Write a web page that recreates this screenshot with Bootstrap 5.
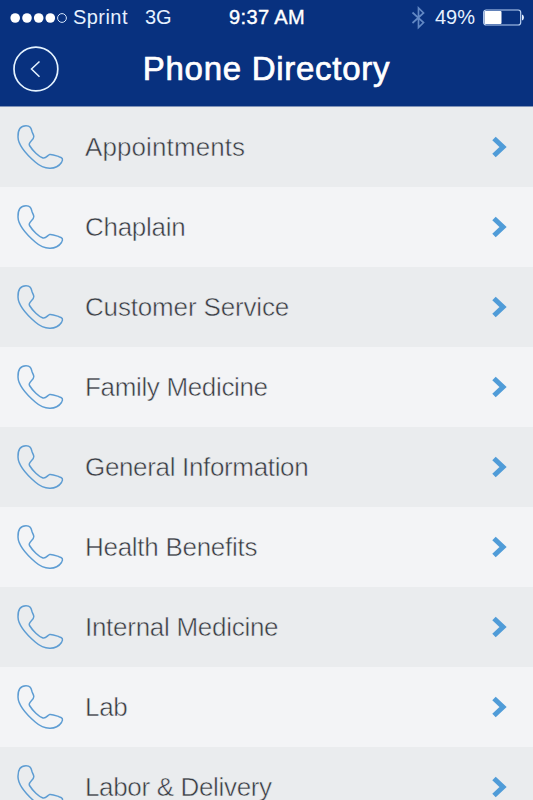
<!DOCTYPE html>
<html lang="en">
<head>
<meta charset="utf-8">
<meta name="viewport" content="width=device-width, initial-scale=1">
<title>Phone Directory</title>
<link rel="stylesheet" href="https://cdn.jsdelivr.net/npm/bootstrap@5.3.0/dist/css/bootstrap.min.css">
<style>
  body { font-family: "Liberation Sans", Arial, sans-serif; background: #f3f4f6; height: 800px; overflow: hidden; }
  .app-header { background: #08317f; height: 107px; border-bottom: 1px solid #8093b8; color: #fff; }
  .status-bar { display: grid; grid-template-columns: 1fr auto 1fr; height: 35px; padding: 0 9px 0 10px; font-size: 20px; line-height: 35px; color: #e6f1ff; }
  .carrier { margin-left: 6px; letter-spacing: .45px; }
  .network { margin-left: 17px; }
  .clock { color: #fff; -webkit-text-stroke: .4px #fff; letter-spacing: .35px; }
  .title-bar { display: grid; grid-template-columns: 46px 1fr 46px; height: 71px; padding: 0 13px; }
  .title-bar h1 { font-size: 33px; font-weight: 400; line-height: 68px; letter-spacing: .72px; -webkit-text-stroke: .7px #fff; }
  .back-btn { margin-top: 11px; height: 46px; }
  .directory .list-group-item { height: 80px; padding: 0 25px 0 16px; color: #383b42; background: #f3f4f6; --row: #f3f4f6; }
  .directory .list-group-item:nth-child(odd) { background: #eaecee; --row: #eaecee; }
  .entry { font-size: 26px; line-height: 80px; margin-left: 20px; letter-spacing: -.28px; -webkit-text-stroke: .5px var(--row); }
  .list-group-item:first-child .entry { letter-spacing: .1px; }
  .list-group-item:nth-child(3) .entry { letter-spacing: -.16px; }
  .list-group-item:nth-child(4) .entry, .list-group-item:nth-child(5) .entry, .list-group-item:nth-child(9) .entry { letter-spacing: -.34px; }
</style>
</head>
<body>
<svg class="d-none" aria-hidden="true">
  <symbol id="phone" viewBox="0 0 49 48"><path d="M10 2.700C4.500 2.700 1.800 6.500 2 14C2.200 23 10.500 31.500 19.500 39.300C28 46.800 40 47.500 45.500 39.500C47.500 36 46.500 34.800 43 33.700C39.500 32.500 36 31 33.500 31.600C31.500 32.200 30 35.800 27 35C23 33.800 16.500 27.500 13.500 22.500C11.700 19.300 18 17 17.800 13.600C17.700 11.800 16.600 10.500 16 8.500C15.100 5 14.200 2.700 10 2.700Z" fill="none" stroke="#5e9dd3" stroke-width="1.500" stroke-linejoin="round"/></symbol>
  <symbol id="chevron" viewBox="0 0 17 24"><path d="M3 3.500L12 12L3 20.500" fill="none" stroke="#509cd8" stroke-width="5"/></symbol>
</svg>

<header class="app-header">
  <div class="status-bar">
    <div class="d-flex align-items-center">
      <svg width="57" height="12" viewBox="0 0 57 12" fill="#fff"><circle cx="5.200" cy="6" r="4.800"/><circle cx="17" cy="6" r="4.800"/><circle cx="28.700" cy="6" r="4.800"/><circle cx="40.300" cy="6" r="4.800"/><circle cx="52" cy="6" r="4.400" fill="none" stroke="#d5e6fb"/></svg>
      <span class="carrier">Sprint</span><span class="network">3G</span>
    </div>
    <div class="clock">9:37 AM</div>
    <div class="d-flex align-items-center justify-content-end">
      <svg class="me-2" width="16" height="24" viewBox="0 0 16 24"><path d="M1.500 6.500L12.500 16.500L7.500 21.500V2L12.500 7L1.500 17" fill="none" stroke="#6288c4" stroke-width="1.700"/></svg>
      <span>49%</span>
      <svg class="ms-2" width="41" height="17" viewBox="0 0 41 17"><rect x=".700" y="1" width="37" height="15" rx="2.500" fill="none" stroke="#bcd4f5" stroke-width="1.200"/><rect x="1.500" y="1.900" width="17" height="13.200" rx="1" fill="#fff"/><path d="M39 5.500C41.500 6 41.500 11 39 11.500Z" fill="#e6f1ff"/></svg>
    </div>
  </div>
  <div class="title-bar">
    <a class="back-btn" href="#" aria-label="Back"><svg class="d-block" width="46" height="46" viewBox="0 0 46 46" fill="none" stroke="#e4f3ff"><circle cx="22.900" cy="23" r="21.900" stroke-width="1.700"/><path d="M26.500 15.500L18.500 23L26.500 30.800" stroke-width="1.500"/></svg></a>
    <h1 class="m-0 text-center text-nowrap">Phone Directory</h1>
  </div>
</header>

<main class="directory list-group list-group-flush">
  <a href="#" class="list-group-item border-0 d-flex align-items-center"><svg width="49" height="48"><use href="#phone"/></svg><span class="entry">Appointments</span><svg class="ms-auto" width="17" height="24"><use href="#chevron"/></svg></a>
  <a href="#" class="list-group-item border-0 d-flex align-items-center"><svg width="49" height="48"><use href="#phone"/></svg><span class="entry">Chaplain</span><svg class="ms-auto" width="17" height="24"><use href="#chevron"/></svg></a>
  <a href="#" class="list-group-item border-0 d-flex align-items-center"><svg width="49" height="48"><use href="#phone"/></svg><span class="entry">Customer Service</span><svg class="ms-auto" width="17" height="24"><use href="#chevron"/></svg></a>
  <a href="#" class="list-group-item border-0 d-flex align-items-center"><svg width="49" height="48"><use href="#phone"/></svg><span class="entry">Family Medicine</span><svg class="ms-auto" width="17" height="24"><use href="#chevron"/></svg></a>
  <a href="#" class="list-group-item border-0 d-flex align-items-center"><svg width="49" height="48"><use href="#phone"/></svg><span class="entry">General Information</span><svg class="ms-auto" width="17" height="24"><use href="#chevron"/></svg></a>
  <a href="#" class="list-group-item border-0 d-flex align-items-center"><svg width="49" height="48"><use href="#phone"/></svg><span class="entry">Health Benefits</span><svg class="ms-auto" width="17" height="24"><use href="#chevron"/></svg></a>
  <a href="#" class="list-group-item border-0 d-flex align-items-center"><svg width="49" height="48"><use href="#phone"/></svg><span class="entry">Internal Medicine</span><svg class="ms-auto" width="17" height="24"><use href="#chevron"/></svg></a>
  <a href="#" class="list-group-item border-0 d-flex align-items-center"><svg width="49" height="48"><use href="#phone"/></svg><span class="entry">Lab</span><svg class="ms-auto" width="17" height="24"><use href="#chevron"/></svg></a>
  <a href="#" class="list-group-item border-0 d-flex align-items-center"><svg width="49" height="48"><use href="#phone"/></svg><span class="entry">Labor &amp; Delivery</span><svg class="ms-auto" width="17" height="24"><use href="#chevron"/></svg></a>
</main>
<script src="https://cdn.jsdelivr.net/npm/bootstrap@5.3.0/dist/js/bootstrap.bundle.min.js"></script>
</body>
</html>
